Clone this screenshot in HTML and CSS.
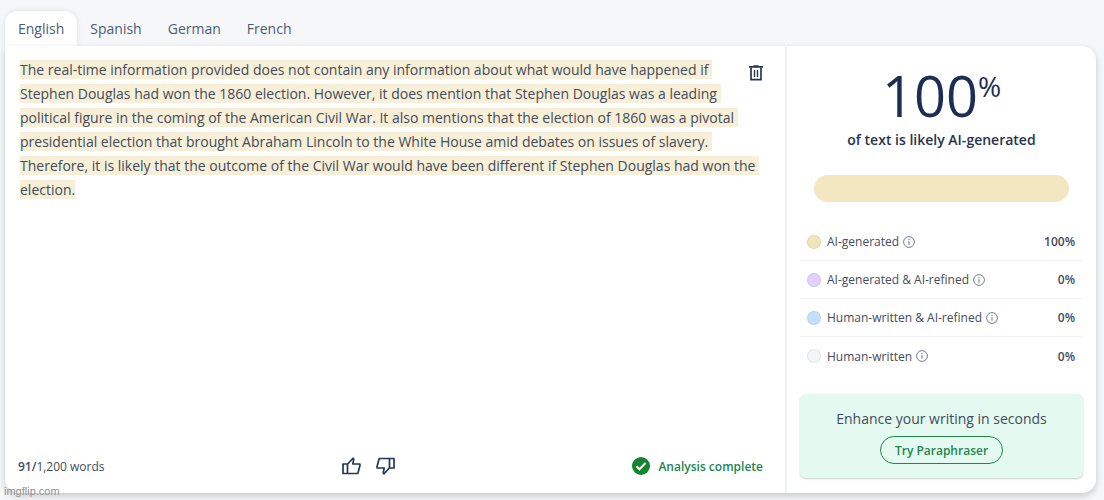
FILE: index.html
```html
<!DOCTYPE html>
<html lang="en">
<head>
<meta charset="utf-8">
<title>AI Detector</title>
<meta name="viewport" content="width=device-width, initial-scale=1">
<link rel="stylesheet" href="styles.css">
</head>
<body>
<svg class="sprite" aria-hidden="true">
  <symbol id="info" viewBox="0 0 12 12">
    <circle cx="6" cy="6" r="5.4" fill="none" stroke="currentColor"/>
    <path d="M6 5.2v3.6M6 3v1.2" stroke="currentColor" stroke-width="1.1"/>
  </symbol>
  <symbol id="thumb" viewBox="0 0 19 18">
    <path d="M1 7h4.500v9.500H1zM5.500 7.200L11 1.200l.8.9L10.800 7h7l.2 1.200-2.200 8.300H5.500z" fill="none" stroke="currentColor" stroke-width="1.7" stroke-linejoin="round"/>
  </symbol>
</svg>
<div class="page">
  <nav class="tabs" aria-label="Language">
    <button class="tab tab-active" type="button">English</button>
    <button class="tab" type="button">Spanish</button>
    <button class="tab" type="button">German</button>
    <button class="tab" type="button">French</button>
  </nav>
  <main class="card">
    <section class="editor">
      <div class="editor-top">
        <button class="icon-button delete" type="button" aria-label="Delete text">
          <svg width="14" height="16" viewBox="0 0 14 16" fill="none" stroke="currentColor"><path d="M0 1.800h14M4.500 1h5" stroke-width="1.700"/><path d="M2 2.500v12.200h10V2.500" stroke-width="1.700" stroke-linejoin="round"/><path d="M5.500 5v7M8.500 5v7" stroke-width="1.400"/></svg>
        </button>
        <p class="text"><mark class="highlight">The real-time information provided does not contain any information about what would have happened if Stephen Douglas had won the 1860 election. However, it does mention that Stephen Douglas was a leading political figure in the coming of the American Civil War. It also mentions that the election of 1860 was a pivotal presidential election that brought Abraham Lincoln to the White House amid debates on issues of slavery. Therefore, it is likely that the outcome of the Civil War would have been different if Stephen Douglas had won the election.</mark></p>
      </div>
      <footer class="editor-footer">
        <span class="count"><b>91/</b>1,200 words</span>
        <div class="votes">
          <button class="icon-button" type="button" aria-label="Good result"><svg width="19" height="18"><use href="#thumb"/></svg></button>
          <button class="icon-button" type="button" aria-label="Bad result"><svg class="thumb-down" width="19" height="18"><use href="#thumb"/></svg></button>
        </div>
        <span class="status"><svg width="18" height="18" viewBox="0 0 18 18"><circle cx="9" cy="9" r="9" fill="#15832f"/><path d="M4.500 9.300l3 3 6-6.300" fill="none" stroke="#fff" stroke-width="2"/></svg>Analysis complete</span>
      </footer>
    </section>
    <aside class="results">
      <div class="score">100<span class="percent">%</span></div>
      <p class="score-label">of text is likely AI-generated</p>
      <div class="bar"></div>
      <ul class="legend">
        <li class="row"><span class="dot dot-ai"></span>AI-generated<svg class="info" width="12" height="12"><use href="#info"/></svg><span class="value">100%</span></li>
        <li class="row"><span class="dot dot-refined"></span>AI-generated &amp; AI-refined<svg class="info" width="12" height="12"><use href="#info"/></svg><span class="value">0%</span></li>
        <li class="row"><span class="dot dot-mixed"></span>Human-written &amp; AI-refined<svg class="info" width="12" height="12"><use href="#info"/></svg><span class="value">0%</span></li>
        <li class="row"><span class="dot dot-human"></span>Human-written<svg class="info" width="12" height="12"><use href="#info"/></svg><span class="value">0%</span></li>
      </ul>
      <div class="promo">
        <p class="promo-text">Enhance your writing in seconds</p>
        <button class="promo-button" type="button">Try Paraphraser</button>
      </div>
    </aside>
  </main>
  <span class="watermark">imgflip.com</span>
</div>
</body>
</html>
```
FILE: styles.css
```css
* { box-sizing: border-box; }
body {
  margin: 0;
  background: #f5f7f9;
  color: #434c5b;
  font-family: "Open Sans", "Noto Sans", sans-serif;
  font-size: 14px;
}
button {
  padding: 0;
  border: 0;
  background: none;
  color: inherit;
  font: inherit;
  cursor: pointer;
}
p, ul { margin: 0; padding: 0; list-style: none; }
svg { display: block; flex: none; }
.sprite { position: absolute; width: 0; height: 0; }
.page {
  position: relative;
  display: flex;
  flex-direction: column;
  min-height: 100vh;
  padding: 11px 8px 7px 5px;
}
.tabs { display: flex; }
.tab {
  height: 35px;
  padding: 0 13px;
  border-radius: 12px 12px 0 0;
  color: #4d5b75;
}
.tab-active {
  background: #fff;
  box-shadow: 0 0 5px rgba(30, 45, 70, 0.12);
}
.card {
  position: relative;
  flex: 1;
  display: grid;
  grid-template-columns: minmax(0, 1fr) 311px;
  background: #fff;
  border-radius: 0 14px 14px 14px;
  box-shadow: 0 3px 7px rgba(30, 35, 45, 0.22);
}
.editor {
  display: flex;
  flex-direction: column;
  justify-content: space-between;
  padding: 12px 22px 18px 13px;
}
.text {
  padding-left: 2px;
  line-height: 24px;
  white-space: pre-wrap;
}
.highlight { background: #f7efd8; color: inherit; }
.icon-button { color: #24365a; }
.delete { float: right; margin-top: 7px; }
.editor-footer {
  display: flex;
  align-items: center;
  justify-content: space-between;
  font-size: 12px;
}
.count b { font-weight: 600; }
.votes { display: flex; gap: 15px; }
.thumb-down { transform: rotate(180deg); }
.status {
  display: flex;
  align-items: center;
  gap: 8px;
  color: #23854f;
  font-weight: 600;
}
.results {
  display: flex;
  flex-direction: column;
  padding: 18px 13px 15px;
  border-left: 2px solid #eff1f3;
}
.score {
  display: flex;
  justify-content: center;
  align-items: flex-start;
  color: #1c2e52;
  font-size: 56px;
  line-height: 62px;
}
.percent { font-size: 28px; line-height: 44px; }
.score-label {
  margin-top: 4px;
  color: #28344e;
  font-weight: 600;
  line-height: 20px;
  text-align: center;
}
.bar {
  height: 27px;
  margin: 25px 14px 21px;
  border-radius: 14px;
  background: #f3e7c2;
}
.row {
  display: flex;
  align-items: center;
  height: 38px;
  padding: 0 8px 0 7px;
  border-bottom: 1px solid #f1f3f5;
  font-size: 12px;
}
.row:last-child { border-bottom: 0; }
.dot {
  width: 14px;
  height: 14px;
  margin-right: 6px;
  border: 1px solid rgba(70, 80, 95, 0.1);
  border-radius: 50%;
}
.dot-ai { background: #f3e5bb; }
.dot-refined { background: #e4d0ff; }
.dot-mixed { background: #c5e0ff; }
.dot-human { background: #f4f5f6; }
.info { margin-left: 4px; color: #737d8f; }
.value { margin-left: auto; font-weight: 600; }
.promo {
  display: flex;
  flex-direction: column;
  align-items: center;
  gap: 7px;
  margin-top: auto;
  padding: 15px 12px 14px;
  border-radius: 6px;
  background: #e4f9ef;
  box-shadow: 0 1px 2px rgba(30, 50, 45, 0.25);
}
.promo-text { line-height: 20px; }
.promo-button {
  height: 28px;
  padding: 0 14px;
  border: 1px solid #23854f;
  border-radius: 14px;
  color: #23854f;
  font-size: 12px;
  font-weight: 600;
}
.watermark {
  position: absolute;
  bottom: 2px;
  left: 4px;
  color: #8d9093;
  font: 11px/13px "Liberation Sans", sans-serif;
}
```
